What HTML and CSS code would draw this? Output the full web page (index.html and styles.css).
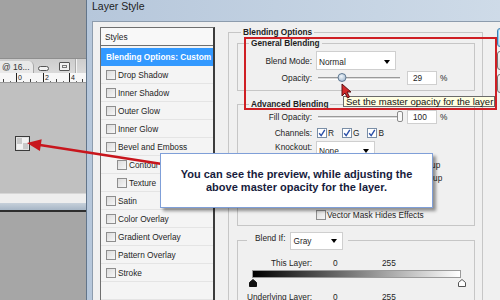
FILE: index.html
```html
<!DOCTYPE html>
<html lang="en">
<head>
  <meta charset="UTF-8">
  <title>Layer Style - Blending Options</title>
  <link rel="stylesheet" href="styles.css">
</head>
<body>

  <div class="screen">

    <!-- document window behind the dialog -->
    <div class="doc">
      <div class="doc-top"></div>
      <div class="doc-tabs">
        <div class="tab">@ 16...</div>
        <span class="win-btn min"></span>
        <span class="win-btn restore"></span>
        <span class="tab-sep"></span>
      </div>
      <svg class="ruler" width="86" height="10" viewBox="0 0 86 10">
        <rect width="86" height="10" fill="#f7f7f7"/>
        <path d="M16.5 0V10M43.5 0V10M69.5 0V10" stroke="#222"/>
        <path d="M3.5 6V10M30.5 6V10M56.5 6V10M82.5 6V10" stroke="#444"/>
        <path d="M10.5 8V10M23.5 8V10M36.5 8V10M50.5 8V10M63.5 8V10M76.5 8V10" stroke="#666"/>
        <path d="M0 9.5H86" stroke="#9a9a9a"/>
        <text x="18" y="7" font-size="7" font-family="Liberation Sans" fill="#222">0</text>
        <text x="45" y="7" font-size="7" font-family="Liberation Sans" fill="#222">2</text>
        <text x="71" y="7" font-size="7" font-family="Liberation Sans" fill="#222">4</text>
      </svg>
      <div class="canvas">
        <div class="preview"></div>
      </div>
      <div class="status"></div>
      <div class="doc-edge"></div>
      <div class="doc-bottom"></div>
    </div>

    <!-- Layer Style dialog -->
    <div class="dialog">
      <div class="titlebar">Layer Style</div>
      <div class="dialog-body">

        <ul class="styles">
          <li class="styles-head">Styles</li>
          <li class="active">Blending Options: Custom</li>
          <li><span class="cb"></span>Drop Shadow</li>
          <li><span class="cb"></span>Inner Shadow</li>
          <li><span class="cb"></span>Outer Glow</li>
          <li><span class="cb"></span>Inner Glow</li>
          <li><span class="cb"></span>Bevel and Emboss</li>
          <li class="sub"><span class="cb"></span>Contour</li>
          <li class="sub"><span class="cb"></span>Texture</li>
          <li><span class="cb"></span>Satin</li>
          <li><span class="cb"></span>Color Overlay</li>
          <li><span class="cb"></span>Gradient Overlay</li>
          <li><span class="cb"></span>Pattern Overlay</li>
          <li><span class="cb"></span>Stroke</li>
          <li></li>
        </ul>

        <div class="panel">
          <fieldset class="group outer">
            <legend>Blending Options</legend>

            <fieldset class="group general">
              <legend>General Blending</legend>
              <div class="row mode">
                <label>Blend Mode:</label>
                <div class="select wide">Normal<i></i></div>
              </div>
              <div class="row opacity">
                <label>Opacity:</label>
                <div class="slider"><span class="knob round" style="left: 29%"></span></div>
                <div class="num">29</div>
                <span class="pct">%</span>
              </div>
            </fieldset>

            <fieldset class="group advanced">
              <legend>Advanced Blending</legend>
              <div class="row fill">
                <label>Fill Opacity:</label>
                <div class="slider"><span class="knob tab" style="left: 100%"></span></div>
                <div class="num">100</div>
                <span class="pct">%</span>
              </div>
              <div class="row channels">
                <label>Channels:</label>
                <span class="chan"><span class="cb on"></span>R</span>
                <span class="chan"><span class="cb on"></span>G</span>
                <span class="chan"><span class="cb on"></span>B</span>
              </div>
              <div class="row knockout">
                <label>Knockout:</label>
                <div class="select short">None<i></i></div>
              </div>
              <div class="opt"><span class="cb"></span>Blend Interior Effects as Group</div>
              <div class="opt"><span class="cb"></span>Blend Clipped Layers as Group</div>
              <div class="opt"><span class="cb"></span>Transparency Shapes Layer</div>
              <div class="opt"><span class="cb"></span>Layer Mask Hides Effects</div>
              <div class="opt"><span class="cb"></span>Vector Mask Hides Effects</div>
            </fieldset>

            <fieldset class="group blendif">
              <legend>
                <span class="blendif-label">Blend If:</span>
                <div class="select gray">Gray<i></i></div>
              </legend>
              <div class="row range">
                <label>This Layer:</label>
                <span class="lo">0</span><span>255</span>
              </div>
              <div class="gradbar"></div>
              <svg class="markers" width="216" height="8" viewBox="0 0 216 8">
                <path d="M0.5 7.5V3.5L4 0.5L7.5 3.5V7.5Z" fill="#111" stroke="#111"/>
                <path d="M209.5 7.5V3.5L213 0.5L216.5 3.5V7.5Z" fill="#fff" stroke="#555"/>
              </svg>
              <div class="row range under">
                <label>Underlying Layer:</label>
                <span class="lo">0</span><span>255</span>
              </div>
            </fieldset>
          </fieldset>
        </div>

        <div class="buttons">
          <div class="btn default"></div>
          <div class="btn"></div>
          <div class="btn"></div>
        </div>

      </div>
    </div>

    <!-- annotations over the screenshot -->
    <svg class="arrow" width="500" height="300" viewBox="0 0 500 300">
      <path d="M162 164L40 145" stroke="#c8161d" stroke-width="2.5"/>
      <path d="M27 143L41.7 139.2L39.9 151Z" fill="#c8161d"/>
    </svg>

    <div class="mark-box"></div>

    <div class="tooltip">Set the master opacity for the layer</div>

    <svg class="cursor" width="12" height="16" viewBox="0 0 12 16">
      <path d="M1 1V13L4 10L6.5 15L8.5 14L6 9H10Z" fill="#d42a2a" stroke="#5b1212" stroke-linejoin="round"/>
    </svg>

    <div class="callout">
      <p>You can see the preview, while adjusting the<br>above master opacity for the layer.</p>
    </div>

  </div>

</body>
</html>
```

FILE: styles.css
```css
* {
  box-sizing: border-box;
}

body {
  margin: 0;
  font-family: "Liberation Sans", Arial, sans-serif;
}

.screen {
  position: relative;
  width: 500px;
  height: 300px;
  overflow: hidden;
  display: flex;
  background: #a3a3a3;
}

/* document window */
.doc {
  width: 86px;
  flex: none;
  display: flex;
  flex-direction: column;
}

.doc > * {
  flex: none;
}

.doc-top {
  height: 58px;
  background: #a2a2a2;
}

.doc-tabs {
  height: 15px;
  display: flex;
  align-items: center;
  background: linear-gradient(#cdcdcd, #dadada);
  border-top: 1px solid #8e8e8e;
}

.tab {
  align-self: flex-end;
  width: 34px;
  height: 12px;
  padding-left: 2px;
  font-size: 8.5px;
  line-height: 12px;
  color: #333;
  white-space: nowrap;
  overflow: hidden;
  background: #e9e9e9;
  border-radius: 0 5px 0 0;
  border-right: 1px solid #a8a8a8;
}

.win-btn {
  display: block;
  border: 1px solid #555;
}

.win-btn.min {
  width: 11px;
  height: 5px;
  margin: 4px 0 0 4px;
  border-radius: 3px;
  background: #f2f2f2;
}

.win-btn.restore {
  width: 11px;
  height: 9px;
  margin: 1px 0 0 10px;
  border-radius: 1px;
  background: #f2f2f2;
  box-shadow: inset 0 0 0 2px #f2f2f2, inset 0 0 0 3px #777;
}

.tab-sep {
  width: 2px;
  height: 14px;
  margin-left: 5px;
  border-left: 1px solid #aaa;
  border-right: 1px solid #f4f4f4;
}

.ruler {
  display: block;
}

.canvas {
  height: 110px;
  padding: 53px 0 0 15px;
  background: #c0c0c0;
}

.preview {
  width: 15px;
  height: 15px;
  border: 1px solid #3a3a3a;
  box-shadow: inset 0 0 0 1px #e2e2e2;
  background: conic-gradient(#f2f2f2 0 25%, #c9c9c9 0 50%, #f2f2f2 0 75%, #c9c9c9 0);
}

.status {
  height: 10px;
  background: #eeeeee;
  border-top: 1px solid #d6d6d6;
}

.doc-edge {
  height: 9px;
  background: linear-gradient(#c6d0da, #a7b6c6);
  border-bottom: 2px solid #2e2e2e;
}

.doc-bottom {
  flex: 1 !important;
  background: #a6a6a6;
}

/* dialog */
.dialog {
  flex: 1;
  display: flex;
  flex-direction: column;
  background: linear-gradient(90deg, #b6c7db, #d2deea);
  border-left: 1px solid #62758a;
}

.titlebar {
  flex: none;
  height: 21px;
  padding: 1px 0 0 5px;
  font-size: 10.5px;
  line-height: 11px;
  color: #1c1c1c;
}

.dialog-body {
  flex: 1;
  display: flex;
  align-items: flex-start;
  margin-left: 5px;
  padding: 5px 0 0 7px;
  background: #f0f0f0;
  border-left: 1px solid #8d9cad;
  border-top: 1px solid #8d9cad;
  font-size: 8.3px;
  color: #1e1e1e;
}

.cb {
  display: inline-block;
  flex: none;
  width: 10px;
  height: 10px;
  border: 1px solid #8e8e8e;
  background: linear-gradient(135deg, #dcdcdc, #f7f7f7);
}

.cb.on {
  border-color: #7a8ea6;
  background: #fff url("data:image/svg+xml;utf8,<svg xmlns='http://www.w3.org/2000/svg' width='8' height='8'><path d='M1.2 4.2L3.2 6.6L6.8 0.8' fill='none' stroke='%232a4fa8' stroke-width='1.4'/></svg>") center / 8px 8px no-repeat;
}

/* styles list */
.styles {
  width: 115px;
  height: 290px;
  flex: none;
  margin: 0;
  padding: 0;
  list-style: none;
  background: #f4f4f4;
  border: 1px solid #6f6f6f;
  border-right: 2px solid #3c3c3c;
}

.styles li {
  height: 18px;
  display: flex;
  align-items: center;
  gap: 2px;
  padding-left: 5px;
  border-bottom: 1px solid #e4e4e4;
  white-space: nowrap;
}

.styles li.styles-head {
  padding-left: 4px;
  margin-bottom: 2px;
  background: #f8f8f8;
  border-bottom: 1px solid #6f6f6f;
}

.styles li.active {
  background: #3399ff;
  color: #fff;
  font-weight: bold;
  border-bottom: none;
}

.styles li.sub {
  padding-left: 16px;
}

/* right panel */
.panel {
  width: 255px;
  flex: none;
  margin-left: 13px;
}

fieldset {
  min-width: 0;
  margin: 0;
  padding: 0;
  border: 1px solid #c6c6c6;
}

legend {
  padding: 0 2px;
  font-weight: bold;
  line-height: 12px;
}

.outer {
  height: 290px;
  padding: 0 7px 0 8px;
}

.outer > legend {
  margin-left: 4px;
  line-height: 10px;
}

.general {
  padding-bottom: 5px;
}

.general > legend,
.advanced > legend {
  margin-left: 11px;
}

.advanced {
  margin-top: 7px;
  padding-bottom: 3px;
}

.row {
  display: flex;
  align-items: center;
}

.row label {
  width: 74px;
  flex: none;
  margin-right: 4px;
  text-align: right;
  white-space: nowrap;
}

.select {
  display: flex;
  align-items: center;
  justify-content: space-between;
  padding-left: 2px;
  background: #fff;
  border: 1px solid #cfcfcf;
}

.select i {
  width: 0;
  height: 0;
  margin-right: 5px;
  border-left: 3.5px solid transparent;
  border-right: 3.5px solid transparent;
  border-top: 4px solid #000;
}

.select.wide {
  width: 80px;
  height: 19px;
  padding-top: 2px;
}

.select.short {
  width: 59px;
  height: 18px;
  padding-top: 2px;
}

.select.gray {
  width: 53px;
  height: 18px;
  margin-left: 5px;
  font-weight: normal;
}

.mode {
  margin-top: 2px;
  height: 19px;
}

.opacity {
  margin-top: 1px;
  height: 14px;
}

.slider {
  position: relative;
  width: 82px;
  height: 3px;
  margin-left: 2px;
  border-top: 1px solid #9a9a9a;
  border-bottom: 1px solid #fff;
  background: #dadada;
}

.knob {
  position: absolute;
  transform: translateX(-50%);
}

.knob.round {
  top: -5px;
  width: 9px;
  height: 9px;
  border-radius: 50%;
  border: 1px solid #5d7892;
  background: radial-gradient(circle at 40% 35%, #eef4fa, #98b1ca);
}

.knob.tab {
  top: -6px;
  width: 6px;
  height: 11px;
  border-radius: 2px;
  border: 1px solid #8a8a8a;
  background: #f8f8f8;
}

.num {
  width: 30px;
  height: 14px;
  margin-left: 7px;
  padding-left: 5px;
  line-height: 12px;
  background: #fff;
  border: 1px solid #cfcfcf;
}

.pct {
  margin-left: 3px;
}

.fill {
  height: 14px;
}

.channels {
  height: 14px;
  margin-top: 2px;
}

.chan {
  display: flex;
  align-items: center;
  gap: 1px;
  margin-right: 8px;
}

.chan:first-of-type {
  margin-left: 1px;
}

.knockout {
  align-items: flex-start;
  margin-top: 1px;
  line-height: 12px;
}

.opt {
  height: 12.5px;
  display: flex;
  align-items: center;
  gap: 1px;
  padding-left: 78px;
  white-space: nowrap;
}

.blendif {
  height: 80px;
  margin-top: 6px;
}

.blendif > legend {
  display: flex;
  align-items: flex-start;
  margin-left: 9px;
  padding: 0 5px 0 8px;
  font-weight: normal;
}

.blendif-label {
  line-height: 12px;
}

.range {
  margin-top: 7px;
  line-height: 12px;
}

.range .lo {
  width: 49px;
  margin-left: 17px;
}

.range.under {
  margin-top: 4px;
}

.gradbar {
  width: 209px;
  height: 8px;
  margin: 1px 0 0 14px;
  border: 1px solid #9a9a9a;
  background: linear-gradient(90deg, #000, #fff);
}

.markers {
  display: block;
  margin: 1px 0 0 11px;
  overflow: visible;
}

.buttons {
  width: 70px;
  flex: none;
  display: flex;
  flex-direction: column;
  gap: 4px;
  margin: 1px 0 0 14px;
}

.btn {
  height: 19px;
  border: 1px solid #707070;
  border-radius: 3px;
  background: linear-gradient(#f4f4f4, #dcdcdc);
}

.btn.default {
  border-color: #3c7fb1;
  box-shadow: inset 0 0 0 1px #8fd0f8;
}

/* annotations */
.arrow {
  position: absolute;
  left: 0;
  top: 0;
}

.mark-box {
  position: absolute;
  left: 244px;
  top: 37px;
  width: 253px;
  height: 73px;
  border: 2px solid #cf1f24;
}

.tooltip {
  position: absolute;
  left: 343px;
  top: 96px;
  width: 152px;
  height: 11px;
  padding-left: 2px;
  font-size: 9.5px;
  line-height: 9px;
  color: #111;
  white-space: nowrap;
  background: #ffffe1;
  border: 1px solid #6b6b6b;
}

.cursor {
  position: absolute;
  left: 341px;
  top: 83px;
}

.callout {
  position: absolute;
  left: 160px;
  top: 153px;
  width: 273px;
  height: 55px;
  display: flex;
  align-items: center;
  justify-content: center;
  background: #fff;
  border: 1px solid #7f9fd8;
  box-shadow: 3px 3px 3px rgba(0, 0, 0, 0.4);
}

.callout p {
  margin: 0;
  font-size: 11px;
  font-weight: bold;
  line-height: 13px;
  text-align: center;
  color: #171c3d;
}
```
